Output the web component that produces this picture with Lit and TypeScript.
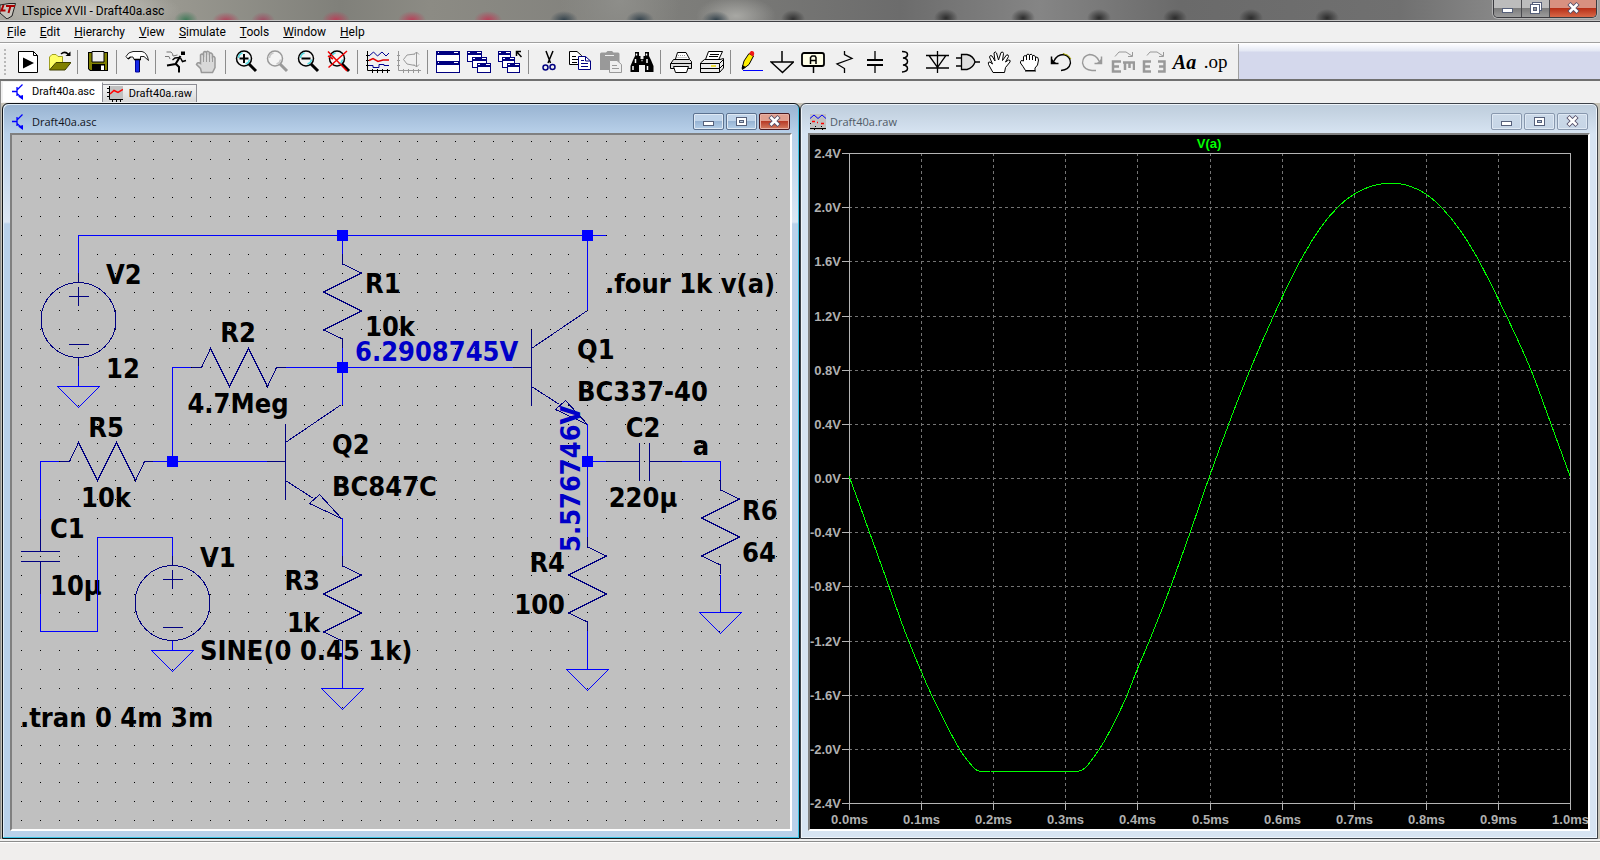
import { LitElement, html, svg, css } from "lit";
import { customElement, property } from "lit/decorators.js";

type Pt = [number, number];

interface Tool {
  label: string;
  art?: unknown;
  text?: string;
  kind?: string;
  off?: boolean;
}

const lens = (inner: unknown, tone = "#000", shine = "#4fd8e0") => svg`
  <path d="M15 14L22 21" stroke=${tone} stroke-width="3"/>
  <circle cx="10" cy="8.500" r="7.500" fill="#f4f4f4" stroke=${tone} stroke-width="1.500"/>
  <path d="M4.500 8a5.500 5.500 0 0 1 4-5M15.500 9.500a5.500 5.500 0 0 1-4 4.500" stroke=${shine} stroke-width="1.500" fill="none"/>
  ${inner}`;

const miniWin = (x: number, y: number, w: number, h: number) => svg`
  <rect x=${x + 0.5} y=${y + 0.5} width=${w} height=${h} fill="#fff" stroke="#000080"/>
  <rect x=${x} y=${y} width=${w + 1} height="4" fill="#000080"/>
  <path d="M${x + 1} ${y + 1.5}h2M${x + w - 4} ${y + 1.5}h4" stroke="#fff"/>`;

const handPath =
  "M6 22.500L1.500 14.500Q0.500 11.500 3 12L5.500 14L2.500 7Q3 4.500 5 6L8 11L7 3Q8 0.500 9.500 3L11.500 10L14 2.500Q16 1 16.500 3.500L15.500 10.500L19.500 5Q21.500 4 21.500 6.500L18.500 12L21.500 10Q24 10 23 12L18.500 17.500L17.500 22.500Z";

const groups: Tool[][] = [
  [
    {
      label: "New schematic",
      art: svg`<path d="M2.500 1.500H17.500L21.500 5.500V22.500H2.500Z" fill="#fff" stroke="#000"/>
        <path d="M17.500 1.500V5.500H21.500" fill="none" stroke="#000"/><path d="M7 7.500L18 13L7 18.500Z" fill="#000"/>`,
    },
    {
      label: "Open",
      art: svg`<path d="M2.500 19.500V7L5 4.500H9L11 6.500H15.500V12" fill="#ffff66" stroke="#a0a020"/>
        <path d="M2.500 20L9 12.500H24L18 20Z" fill="#808000" stroke="#404000"/>
        <path d="M14 4Q18 0.500 21.500 4.500" fill="none" stroke="#000" stroke-width="1.500"/><path d="M18.500 6H23.500V1.500Z" fill="#000"/>`,
    },
  ],
  [
    {
      label: "Save",
      art: svg`<path d="M2 2H22V21H4L2 19Z" fill="#000"/><path d="M3 3H21V20H4.500L3 18.500Z" fill="#808000"/>
        <path d="M6 1.500H18V12H6Z" fill="#eee" stroke="#000" stroke-width="1"/><path d="M6 14H19V21H6Z" fill="#000"/>
        <path d="M15 15.500h3V20h-3Z" fill="#fff"/>`,
    },
  ],
  [
    {
      label: "Control panel",
      art: svg`<path d="M10.500 9H14.500V22H10.500Z" fill="#1428e8" stroke="#0000a0"/><path d="M14.500 10V22" stroke="#00004a"/>
        <path d="M1 6.500Q3 2 8 1.500H17Q22 2.500 23.500 10.500L19 6.500H15.500V9.500H9L8 7H5.500L3 9Z" fill="#fff" stroke="#222"/>
        <path d="M3 9L5.500 7M9 9.500H16" stroke="#000" stroke-width="1.500"/>`,
    },
  ],
  [
    {
      label: "Run",
      art: svg`<path d="M17 1.500H21V5H17Z" fill="#000"/>
        <path d="M16.500 6L11.500 14L3 15.500M11.500 13.500L15 17V22.500" fill="none" stroke="#000" stroke-width="2"/>
        <path d="M16 7.500L11 8L8.500 10M16.500 8L18.500 11.500L22 10.500" fill="none" stroke="#000" stroke-width="1.500"/>
        <path d="M2.500 2H7Q9 3.500 9 6L13.500 5M1 6.500H5L6 9" fill="none" stroke="#777"/>`,
    },
    {
      label: "Halt",
      off: true,
      art: svg`<path d="M6.500 22.500L5.500 18.500L1.500 14.500Q2.500 11.500 5.500 13.500V5Q7 3 8.500 5V2.500Q10 0.500 11.500 2.500V2Q13 0.500 14.500 2.500V3.500Q16 2 17.500 4.500V7Q19 5.500 20 8V17.500L17.500 22.500Z" fill="#d8d8d8" stroke="#999" stroke-width="1.500"/>
        <path d="M8.500 5V12M11.500 3V12M14.500 3V12M17.500 6V12" stroke="#999"/>`,
    },
  ],
  [
    { label: "Zoom in", art: lens(svg`<path d="M5.500 8.500H14.500M10 4V13" stroke="#000" stroke-width="2"/>`) },
    { label: "Pan", off: true, art: lens("", "#999", "#c8c8c8") },
    { label: "Zoom out", art: lens(svg`<path d="M5.500 8.500H14.500" stroke="#000" stroke-width="2"/>`) },
    {
      label: "Zoom full extents",
      art: lens(svg`<path d="M1 1.500L20 21M20 1L1.500 17.500M1 6L6 9" stroke="#f00000" stroke-width="1.500"/>`),
    },
  ],
  [
    {
      label: "Pick visible traces",
      art: svg`<path d="M1.500 1V20.500H24M0 5.500H3M0 10.500H3M0 15.500H3M6.500 19V23M11.500 19V23M16.500 19V23M21.500 19V23" stroke="#000" fill="none"/>
        <path d="M3 6L7.500 2L11.500 6L16 2L20 6L23 3" stroke="#000090" fill="none"/>
        <path d="M3 10.500L7 8.500L12 11.500L17 10H23" stroke="#e00000" fill="none" stroke-width="1.500"/>
        <path d="M3 15.500H7V17.500H13V14.500H18V15.500H23" stroke="#000090" fill="none"/>`,
    },
    {
      label: "Autorange",
      off: true,
      art: svg`<path d="M1.500 1V20.500H24M0 5.500H3M0 10.500H3M0 15.500H3M6.500 19V23M11.500 19V23M16.500 19V23M21.500 19V23" stroke="#999" fill="none"/>
        <path d="M19.500 2V17M17 4.500L19.500 2L22 4.500M17 14.500L19.500 17L22 14.500M18 4L10 5L6.500 9.500L10 14L18 15.500" stroke="#999" fill="none"/>`,
    },
  ],
  [
    {
      label: "Tile windows",
      art: svg`<rect x="0.500" y="1.500" width="23" height="21" fill="#fff" stroke="#000080"/>
        <path d="M0 1H24V5H0ZM0 11H24V15H0Z" fill="#000080"/>
        <path d="M2 2.500H3M18 2.500H22M2 12.500H3M18 12.500H22M1 10.500H23" stroke="#fff"/>`,
    },
    { label: "Cascade windows", art: svg`${miniWin(0, 1, 14, 10)}${miniWin(5, 7, 14, 10)}${miniWin(10, 13, 13, 9)}` },
    {
      label: "Close all windows",
      art: svg`${miniWin(0, 1, 12, 10)}${miniWin(4, 7, 12, 10)}${miniWin(9, 13, 12, 9)}
        <path d="M18.500 6V1.500H23M18.500 1.500L23.500 7" stroke="#000" fill="none" stroke-width="1.500"/>`,
    },
  ],
  [
    {
      label: "Cut",
      art: svg`<path d="M9 1L13.500 13M16 1L11 13" stroke="#000" stroke-width="1.500"/>
        <circle cx="8.500" cy="17.500" r="2.500" fill="none" stroke="#000080" stroke-width="1.500"/><circle cx="15.500" cy="17" r="2.500" fill="none" stroke="#000080" stroke-width="1.500"/>`,
    },
    {
      label: "Copy",
      art: svg`<path d="M1.500 1.500H9L13.500 5.500V14.500H1.500Z" fill="#fff" stroke="#000"/><path d="M4 6.500H8M4 9.500H10M4 12.500H9" stroke="#000"/>
        <path d="M10.500 6.500H17.500L22.500 11V19.500H10.500Z" fill="#fff" stroke="#000080"/><path d="M17.500 6.500V11H22.500M13 10.500H16M13 13.500H20M13 16.500H20" stroke="#000080" fill="none"/>`,
    },
    {
      label: "Paste",
      off: true,
      art: svg`<path d="M1 4Q1 2.500 2.500 2.500H7L8.500 1H13L14.500 2.500H19Q20.500 2.500 20.500 4V20H1Z" fill="#999"/><path d="M6 5.500H15" stroke="#eee"/>
        <path d="M10.500 10.500H18L22.500 14.500V22.500H10.500Z" fill="#eee" stroke="#999"/><path d="M13 15.500H18M13 18.500H20" stroke="#999"/>`,
    },
    {
      label: "Find",
      art: svg`<path d="M5 2H9V6H10.500V9H13.500V6H15V2H19V6L21 10L23.500 16V22H15V15H9V22H0.500V16L3 10L5 6Z" fill="#000"/>
        <path d="M6.500 3.500V5.500M16.500 3.500V5.500M5.500 9V13M17 9V13M3 16V20M17.500 16V20M11.500 10.500H12.500" stroke="#fff" stroke-width="1.500"/>`,
    },
  ],
  [
    {
      label: "Print setup",
      art: svg`<path d="M6.500 9L8.500 2.500H17L20.500 9" fill="#fff" stroke="#000"/><path d="M9 5.500H17M8.500 7.500H18" stroke="#999" stroke-dasharray="1 1"/>
        <path d="M1.500 14L4.500 9.500H20.500L22.500 11.500V18.500H1.500Z" fill="#ddd" stroke="#000"/><path d="M1.500 13.500H22.500" stroke="#000"/>
        <path d="M4.500 16.500H19.500L17.500 22.500H6.500Z" fill="#fff" stroke="#000"/>`,
    },
    {
      label: "Print",
      art: svg`<path d="M5.500 9.500L8.500 1.500H22.500L18.500 10" fill="#fff" stroke="#000"/><path d="M10 4.500H19M9 6.500H18" stroke="#000"/>
        <path d="M0.500 13L4.500 9.500H20L23.500 8.500V18L19.500 22.500H0.500Z" fill="#eee" stroke="#000"/><path d="M0.500 13.500H19.500V22M19.500 13.500L23.500 9.500M1 18.500H19.500L23 15" stroke="#000" fill="none"/>
        <path d="M11 16H16" stroke="#e8d800" stroke-width="1.500"/>`,
    },
  ],
  [
    {
      label: "Wire",
      art: svg`<path d="M3 18.500L5 11L10 3.500L14.500 6L10 14.500L4 19Z" fill="#ffee00" stroke="#000"/><path d="M10 3.500L12 1Q16 0.500 15 5L14 6.500Z" fill="#f01818"/>
        <path d="M3 20V15L7 17Z" fill="#000"/><path d="M4 20.500H24" stroke="#0000ff"/>`,
    },
    { label: "Ground", art: svg`<path d="M12 1V12M1 12H23.500L12.500 22.500Z" fill="none" stroke="#000" stroke-width="1.500"/>` },
    {
      label: "Label net",
      art: svg`<rect x="1" y="3" width="22" height="13" rx="2" fill="#ffffe8" stroke="#000" stroke-width="1.800"/><path d="M12.500 16V23" stroke="#000" stroke-width="1.500"/>
        <path d="M9.500 14V7.500L11 6H14L15 7.500V14M9 10.500H15.500" fill="none" stroke="#000" stroke-width="1.500"/>`,
    },
    { label: "Resistor", art: svg`<path d="M12.500 1V4.500L20 8.500L5 14L12.500 18.500V23" fill="none" stroke="#000" stroke-width="1.300"/>` },
    { label: "Capacitor", art: svg`<path d="M12 1V10M12 15V23" stroke="#000" stroke-width="1.300"/><path d="M4 10H20M4 15H20" stroke="#000" stroke-width="2"/>` },
    {
      label: "Inductor",
      art: svg`<path d="M8 1.500Q13.500 1.500 13.500 4.500T9 8Q13.500 8.500 13.500 11.500T9 15Q13.500 15.500 13.500 18.500T8 22" fill="none" stroke="#000" stroke-width="1.500"/>`,
    },
    { label: "Diode", art: svg`<path d="M12.500 1V23M1 5.500H24M1 18H24M4 5.500L12.500 17.500L21 5.500Z" fill="none" stroke="#000" stroke-width="1.300"/>` },
    {
      label: "Component",
      art: svg`<path d="M5.500 4.500H11Q17.500 6 19 12Q17 18 11 19.500H5.500Z" fill="#ddd" stroke="#000" stroke-width="1.300"/><path d="M0 8H5M0 16H5M19 12H24" stroke="#000" stroke-width="1.500"/>`,
    },
    { label: "Move", art: svg`<path d=${handPath} fill="#fff" stroke="#000"/>` },
    {
      label: "Drag",
      art: svg`<path d="M7.500 20.500L5 16.500L2.500 13Q2 9.500 5.500 11V6.500Q7 4.500 8.500 6.500V5Q10 3 11.500 5Q13.500 3 14.500 5.500Q16.500 4.500 17.500 7Q20.500 6.500 20.500 10L19.500 15L17 18V20.500Z" fill="#fff" stroke="#000"/>
        <path d="M8.500 6V10M11.500 5V10M14.500 6V10M17.500 7V11M7 21H18" stroke="#000"/>`,
    },
    {
      label: "Undo",
      art: svg`<path d="M5 11Q8 4.500 14.500 4.500Q21.500 6 21.500 13Q20 20 12 20.500" fill="none" stroke="#000" stroke-width="1.300"/><path d="M2.500 6.500V13.500H9.500" fill="none" stroke="#000" stroke-width="1.500"/><path d="M3 9V13.500H7.500Z" fill="#000"/><path d="M14 3.500Q20 4.500 22 9" stroke="#a0a000" fill="none"/>`,
    },
    {
      label: "Redo",
      off: true,
      art: svg`<path d="M19 11Q16 4.500 9.500 4.500Q2.500 6 2.500 13Q4 20 12 20.500H16" fill="none" stroke="#999" stroke-width="1.300"/><path d="M21.500 6.500V13.500H14.500" fill="none" stroke="#999" stroke-width="1.500"/><path d="M21 9V13.500H16.500Z" fill="#999"/>`,
    },
    {
      label: "Rotate",
      off: true,
      art: svg`<path d="M10 11.500H2V21.500H10M2 16.500H8" fill="none" stroke="#999" stroke-width="2.500"/><path d="M12 12.500H24M14 12V20M18.500 12V18M23 12V20" fill="none" stroke="#999" stroke-width="2.500"/>
        <path d="M4 6.500L8 2H15L21 6M21.500 2V6.500H17" fill="none" stroke="#999"/>`,
    },
    {
      label: "Mirror",
      off: true,
      art: svg`<path d="M9 11.500H2V21.500H9M2 16.500H8M16 11.500H22.500V21.500H16M22.500 16.500H17" fill="none" stroke="#999" stroke-width="2.500"/>
        <path d="M5 5.500L8 2H15L21 6M21.500 2V6.500H17" fill="none" stroke="#999"/>`,
    },
    { label: "Text", text: "Aa", kind: "aa" },
    { label: "SPICE directive", text: ".op", kind: "op" },
  ],
];

const transistorIcon = html`<svg class="i16" viewBox="0 0 16 16" aria-hidden="true">
  <path d="M0 7.500H5M5 3V12M5 6L10.500 0.500M5 9.500L10 14" fill="none" stroke="#0000ff" stroke-width="1.300" />
  <path d="M6 12.500L11 11V16Z" fill="#0000ff" />
</svg>`;

const rawTabIcon = html`<svg class="i16" viewBox="0 0 16 16" aria-hidden="true">
  <path d="M2 0H16V13H2Z" fill="#c0c0c0" />
  <path d="M2.500 0V13.500H16M0 2.500H2M0 6.500H2M0 10.500H2M5.500 13V16M9.500 13V16M13.500 13V16" stroke="#000" fill="none" />
  <path d="M3 8L7 4.500L11 6.500L16 3.500" stroke="#f00" fill="none" stroke-width="1.500" />
</svg>`;

const rawWinIcon = html`<svg class="i16" viewBox="0 0 16 16" aria-hidden="true">
  <path d="M0 0H16V16H0Z" fill="#c0c0c0" />
  <path d="M0 4.500L4 1L8 4.500L12 1L16 4.500" stroke="#00f" fill="none" />
  <path d="M2 7.500H5M7 8.500H8M11 9.500H14" stroke="#f00" stroke-width="1.500" />
  <path d="M0 9.500H1M5 12.500H6M11 12.500H12M0 14.500H16M4 15.500H5M12 15.500H13" stroke="#000" />
</svg>`;

const glyphs: Record<string, unknown> = {
  Minimize: svg`<rect x="3.500" y="7.500" width="10" height="4" fill="#fff" stroke="#56607a"/>`,
  Maximize: svg`<rect x="3.500" y="3.500" width="10" height="8" fill="#fff" stroke="#56607a"/><rect x="6.500" y="6.500" width="4" height="2" fill="#b8c8dc" stroke="#56607a"/>`,
  Restore: svg`<rect x="5.500" y="1.500" width="9" height="8" fill="#fff" stroke="#56607a"/><rect x="3.500" y="3.500" width="9" height="9" fill="#fff" stroke="#56607a"/><rect x="6.500" y="6.500" width="3" height="3" fill="#999" stroke="#56607a"/>`,
  Close: svg`<path d="M4 2.500L13 11.500M13 2.500L4 11.500" stroke="#56506a" stroke-width="4.500"/><path d="M4.500 3L12.500 11M12.500 3L4.500 11" stroke="#fff" stroke-width="2.500"/>`,
};

const glyph = (name: string) => html`<svg class="glyph" viewBox="0 0 17 15" aria-hidden="true">${glyphs[name]}</svg>`;

@customElement("doc-window")
class DocWindow extends LitElement {
  @property() heading = "";
  @property({ type: Boolean, reflect: true }) active = false;

  static styles = css`
    :host {
      display: flex;
      flex-direction: column;
      min-width: 0;
      min-height: 0;
      box-sizing: border-box;
      padding: 0 7px 7px;
      border: 1px solid #3c4148;
      border-radius: 6px 6px 0 0;
      background: linear-gradient(#bdccdb, #d7e4f2 30px);
      box-shadow: inset 0 0 0 1px #eef4fa;
    }
    :host([active]) {
      border-color: #101418;
      background: linear-gradient(#98b3d1, #b9d1ea 30px, #dbe6f3 118px, #b9d1ea 120px);
      box-shadow: inset -1px -1px 0 #3cc4e4, inset 1px 1px 0 #e0edf8;
    }
    .bar {
      display: flex;
      align-items: center;
      gap: 4px;
      height: 29px;
      padding: 6px 2px 0;
      box-sizing: border-box;
      color: #4f5a66;
    }
    :host([active]) .bar {
      color: #10151c;
    }
    .name {
      flex: 1;
      font: 11px/16px "Open Sans", sans-serif;
    }
    .buttons {
      display: flex;
      gap: 2px;
    }
    button {
      display: grid;
      place-items: center;
      width: 31px;
      height: 17px;
      padding: 0;
      border: 1px solid #8898ae;
      border-radius: 2px;
      background: linear-gradient(#cbd9e8, #c6d5e6);
      box-shadow: inset 0 0 0 1px #dfe9f4;
    }
    :host([active]) button {
      border-color: #5c7290;
      background: linear-gradient(#c0d4ea 50%, #98b4d4 50%, #b4cee8);
    }
    :host([active]) .close {
      border-color: #4a1a20;
      background: linear-gradient(#e0a090 50%, #b83c28 50%, #d47c60);
      box-shadow: inset 0 0 0 1px #e8b0a4;
    }
    .glyph {
      width: 17px;
      height: 15px;
    }
    .body {
      flex: 1;
      min-height: 0;
      overflow: hidden;
      border: 2px solid #fff;
      border-top-color: #808080;
      border-left-color: #808080;
    }
  `;

  render() {
    return html`
      <div class="bar">
        <slot name="icon"></slot>
        <span class="name">${this.heading}</span>
        <div class="buttons">
          <button aria-label="Minimize">${glyph("Minimize")}</button>
          <button aria-label="Maximize">${glyph("Maximize")}</button>
          <button class="close" aria-label="Close">${glyph("Close")}</button>
        </div>
      </div>
      <div class="body"><slot></slot></div>
    `;
  }
}

@customElement("schematic-view")
class SchematicView extends LitElement {
  static styles = css`
    :host {
      display: block;
      height: 100%;
      background: #c0c0c0;
    }
    .sheet {
      display: block;
      width: 100%;
      height: 100%;
    }
    .label {
      font: bold 27px "DejaVu Sans Condensed", "DejaVu Sans", sans-serif;
    }
    .probe {
      fill: #0000c8;
    }
    .mid {
      text-anchor: middle;
    }
    .end {
      text-anchor: end;
    }
    .lines {
      fill: none;
      shape-rendering: crispEdges;
    }
    .wire {
      stroke: #0000ff;
    }
    .part {
      stroke: #000080;
    }
    .dot {
      stroke: #000;
    }
    .joint {
      fill: #0000ff;
    }
  `;

  private dots() {
    let d = "";
    for (let r = 0; r < 37; r++) {
      const y = Math.round(140.5 + 18.875 * r) + 0.5;
      for (let c = 0; c < 41; c++) d += `M${Math.round(21 + 18.875 * c)} ${y}h1`;
    }
    return d;
  }

  private ground(x: number, y: number) {
    return `M${x - 21} ${y}H${x + 21}L${x} ${y + 21}Z`;
  }

  private resistorV(x: number, y: number) {
    return `M${x} ${y - 10}V${y}L${x + 19} ${y + 9}L${x - 19} ${y + 28}L${x + 19} ${y + 47}L${x - 19} ${y + 66}L${x} ${y + 75}V${y + 84}`;
  }

  private resistorH(x: number, y: number) {
    return `M${x - 10} ${y}H${x}L${x + 9} ${y - 19}L${x + 28} ${y + 19}L${x + 47} ${y - 19}L${x + 66} ${y + 19}L${x + 75} ${y}H${x + 84}`;
  }

  private source(x: number, y: number) {
    return `M${x - 37.5} ${y}a37.5 37.5 0 1 0 75 0a37.5 37.5 0 1 0 -75 0M${x - 10} ${y - 24}H${x + 10}M${x} ${y - 33}V${y - 14}M${x - 10} ${y + 24}H${x + 10}M${x} ${y - 47}V${y - 37}M${x} ${y + 37}V${y + 47}`;
  }

  private npn(x: number, y: number) {
    return `M${x - 19} ${y}H${x}M${x} ${y - 38}V${y + 38}M${x} ${y - 19}L${x + 56} ${y - 57}M${x} ${y + 19}L${x + 28} ${y + 37}M${x + 24} ${y + 42}L${x + 34} ${y + 33}L${x + 56} ${y + 57}Z`;
  }

  private labels: [string, number, number, string?][] = [
    ["V2", 106, 284],
    ["12", 106, 378],
    ["R1", 365, 293],
    ["10k", 365, 336],
    ["R2", 238, 342, "mid"],
    ["4.7Meg", 238, 413, "mid"],
    ["R5", 106, 437, "mid"],
    ["10k", 106, 507, "mid"],
    ["Q2", 332, 454],
    ["BC847C", 332, 496],
    ["Q1", 577, 359],
    ["BC337-40", 577, 401],
    ["C2", 643, 437, "mid"],
    ["220µ", 643, 507, "mid"],
    ["a", 701, 455, "mid"],
    ["R6", 742, 520],
    ["64", 742, 562],
    ["R4", 565, 572, "end"],
    ["100", 565, 614, "end"],
    ["R3", 320, 590, "end"],
    ["1k", 320, 632, "end"],
    ["C1", 50, 538],
    ["10µ", 50, 595],
    ["V1", 200, 567],
    ["SINE(0 0.45 1k)", 200, 660],
    [".tran 0 4m 3m", 20, 727],
    [".four 1k v(a)", 605, 293],
  ];

  private joints: Pt[] = [
    [342, 235],
    [587, 235],
    [342, 367],
    [172, 461],
    [587, 461],
  ];

  render() {
    const wires =
      "M78.5 273V235.5H606M342.5 235V254M587.5 235V310M342.5 348V405M172.5 461V367.5H191M286 367.5H513" +
      "M59 461.500H40.500V519M153 461.500H267M40.500 594V631.500H97.500V537.500H172.500V556M78.500 366V386M172.500 650V641" +
      "M342.500 518V556M342.500 650V688M587.500 424V537M587.500 631V669M587 461.500H606M682 461.500H720.500V480M720.500 575V612" +
      this.ground(78.5, 386.5) + this.ground(172.5, 650.5) + this.ground(342.5, 688.5) + this.ground(587.5, 669.5) + this.ground(720.5, 612.5);
    const parts =
      this.source(78.5, 320) + this.source(172.5, 603) +
      this.resistorV(342.5, 264) + this.resistorV(342.5, 566) + this.resistorV(587.5, 547) + this.resistorV(720.5, 490) +
      this.resistorH(201.5, 367.5) + this.resistorH(69.5, 461.5) +
      this.npn(285.5, 461.5) + this.npn(531.5, 367.5) +
      "M40.500 519V551M21 551.500H60M21 561.500H60M40.500 561V594M606 461.500H639M639.500 443V481M649.500 443V481M650 461.500H682";
    return html`<svg class="sheet" viewBox="12 135 778 694" role="img" aria-label="Amplifier schematic">
      <path class="lines dot" d=${this.dots()} />
      ${this.labels.map(([t, x, y, a]) => svg`<text class="label ${a ?? ""}" x=${x} y=${y}>${t}</text>`)}
      <path class="lines part" d=${parts} />
      <path class="lines wire" d=${wires} />
      ${this.joints.map(([x, y]) => svg`<rect class="joint" x=${x - 5} y=${y - 5} width="11" height="11"/>`)}
      <text class="label probe" x="355" y="361">6.2908745V</text>
      <text class="label probe" transform="translate(580 552) rotate(-90)">5.576746V</text>
    </svg>`;
  }
}

@customElement("waveform-view")
class WaveformView extends LitElement {
  static styles = css`
    :host {
      display: block;
      height: 100%;
      background: #000;
    }
    .plot {
      display: block;
      width: 100%;
      height: 100%;
    }
    .axis,
    .grid,
    .trace {
      fill: none;
      shape-rendering: crispEdges;
    }
    .axis {
      stroke: #b4b4b4;
    }
    .grid {
      stroke: #747474;
      stroke-dasharray: 3 3;
    }
    .trace {
      stroke: #00ff00;
    }
    .tick {
      font: bold 13px "Liberation Sans", Arial, sans-serif;
      fill: #b0b0b0;
      text-anchor: middle;
    }
    .tick.y {
      text-anchor: end;
    }
    .tick.title {
      fill: #00ff00;
    }
  `;

  private trace: Pt[] = [
    [849, 476], [860, 506], [886, 578], [904, 629], [921, 671], [934, 700], [960, 750], [975, 769], [979, 771], [990, 772],
    [1000, 771.5], [1074, 771.5], [1083, 769.5], [1091, 761], [1105, 740], [1125, 700], [1137, 670], [1153, 632], [1172, 583],
    [1191, 530], [1210, 475], [1231, 418], [1250, 370], [1274, 315], [1298, 265], [1321, 227], [1340, 205], [1356, 193],
    [1372, 186], [1384, 183.5], [1398, 183.5], [1412, 187], [1426, 194], [1442, 208], [1460, 230], [1479, 261], [1506, 315],
    [1531, 370], [1551, 424], [1570, 476],
  ];

  private smooth(p: Pt[]) {
    let d = `M${p[0][0]} ${p[0][1]}`;
    for (let i = 0; i < p.length - 1; i++) {
      const a = p[Math.max(0, i - 1)], b = p[i], c = p[i + 1], e = p[Math.min(p.length - 1, i + 2)];
      const k = (c[0] - b[0]) / 3;
      const m = (u: Pt, v: Pt) => (v[0] === u[0] ? 0 : (v[1] - u[1]) / (v[0] - u[0]));
      d += `C${b[0] + k} ${b[1] + k * m(a, c)} ${c[0] - k} ${c[1] - k * m(b, e)} ${c[0]} ${c[1]}`;
    }
    return d;
  }

  render() {
    const xs = Array.from({ length: 11 }, (_, i) => Math.round(849 + 72.1 * i) + 0.5);
    const ys = Array.from({ length: 13 }, (_, i) => Math.round(153 + 54.17 * i) + 0.5);
    const grid = xs.slice(1, -1).map((x) => `M${x} 153V803`).join("") + ys.slice(1, -1).map((y) => `M849 ${y}H1570`).join("");
    const ticks = xs.map((x) => `M${x} 803V810`).join("") + ys.map((y) => `M842 ${y}H849`).join("");
    return html`<svg class="plot" viewBox="810 135 778 694" role="img" aria-label="Plot of V(a)">
      <path class="grid" d=${grid} />
      <path class="axis" d=${"M849.5 153.500H1570.500V803.500H849.500Z" + ticks} />
      <path class="trace" d=${this.smooth(this.trace)} />
      <text class="tick title" x="1209" y="148">V(a)</text>
      ${xs.map((x, i) => svg`<text class="tick" x=${x} y="824">${(i / 10).toFixed(1)}ms</text>`)}
      ${ys.map((y, i) => svg`<text class="tick y" x="841" y=${y + 4.5}>${i === 6 ? "0.0" : (2.4 - 0.4 * i).toFixed(1)}V</text>`)}
    </svg>`;
  }
}

@customElement("app-root")
class AppRoot extends LitElement {
  static styles = css`
    :host {
      display: flex;
      flex-direction: column;
      height: 100vh;
      background: #f0f0f0;
      font: 12px/16px Roboto, "Open Sans", sans-serif;
      color: #000;
    }
    .title {
      display: flex;
      align-items: center;
      gap: 6px;
      height: 22px;
      box-sizing: border-box;
      border-bottom: 1px solid #3e3e42;
      box-shadow: inset 0 -1px 0 #c4c4c4;
      background:
        radial-gradient(90px 24px at 90px 10px, rgba(214, 212, 206, 0.8), transparent),
        radial-gradient(12px 9px at 186px 20px, #3f7a58, transparent),
        radial-gradient(14px 9px at 226px 21px, #b04058, transparent),
        radial-gradient(12px 9px at 263px 21px, #a04860, transparent),
        radial-gradient(14px 9px at 336px 20px, #b84058, transparent),
        radial-gradient(14px 9px at 412px 20px, #b84058, transparent),
        radial-gradient(14px 9px at 488px 20px, #b84058, transparent),
        radial-gradient(14px 9px at 564px 20px, #33424c, transparent),
        radial-gradient(14px 9px at 640px 20px, #33424c, transparent),
        radial-gradient(14px 9px at 716px 20px, #33424c, transparent),
        radial-gradient(12px 9px at 793px 19px, #303030, transparent),
        radial-gradient(12px 9px at 946px 18px, #2c2c2c, transparent),
        radial-gradient(12px 9px at 1023px 18px, #2c2c2c, transparent),
        radial-gradient(12px 9px at 1099px 18px, #2c2c2c, transparent),
        radial-gradient(12px 9px at 1175px 18px, #2c2c2c, transparent),
        radial-gradient(12px 9px at 1251px 18px, #2c2c2c, transparent),
        radial-gradient(12px 9px at 1327px 18px, #2c2c2c, transparent),
        radial-gradient(40px 20px at 736px 16px, #a8a8a4, transparent),
        radial-gradient(60px 60px at 620px 0, #8e8e8a, transparent),
        linear-gradient(90deg, #aaa8a0, #98978f 180px, #80807a 340px, #8c8b84 430px, #7c7c79 700px, #6c6c6c 900px, #858585 1040px, #6a6a6a 1180px, #707070 1400px, #a0a0a0);
    }
    .caption {
      flex: 1;
    }
    .sys {
      display: flex;
      align-self: flex-start;
      margin-right: 3px;
      height: 18px;
      overflow: hidden;
      box-sizing: border-box;
      border: 1px solid #3a3a3e;
      border-top: 0;
      border-radius: 0 0 5px 5px;
      box-shadow: 0 0 0 1px #b4b4b4;
    }
    .sys button {
      display: grid;
      place-items: center;
      width: 28px;
      padding: 0;
      border: 0;
      border-right: 1px solid #4a4a4e;
      background: linear-gradient(#bcbcbc 50%, #7c7c7c 50%, #9c9c9c);
    }
    .sys .close {
      width: 46px;
      border-right: 0;
      background: linear-gradient(#d89080 45%, #b83018 50%, #d86848);
    }
    .glyph {
      width: 17px;
      height: 15px;
    }
    .menu {
      display: flex;
      height: 20px;
      border-bottom: 1px solid #a0a0a0;
    }
    .menu button {
      padding: 0 7px;
      border: 0;
      background: none;
      font: inherit;
      color: inherit;
    }
    .toolbar {
      display: flex;
      height: 38px;
      border-top: 1px solid #fff;
      border-bottom: 2px solid #707070;
      box-sizing: border-box;
      background: linear-gradient(#fcfcff, #e4e8f4 7px, #d4d8ec 8px);
    }
    .strip {
      display: flex;
      align-items: center;
      padding: 0 7px 0 4px;
      border-right: 1px solid #a0a0a0;
      background: linear-gradient(#f6f6f6, #f0f0f0 6px);
    }
    .grip {
      width: 2px;
      height: 26px;
      margin-right: 6px;
      background: repeating-linear-gradient(#b8b8b8 0 2px, transparent 2px 4px);
    }
    .group {
      display: flex;
    }
    .group + .group::before {
      content: "";
      align-self: center;
      width: 1px;
      height: 24px;
      margin: 0 4px 0 3px;
      background: #8c8c8c;
    }
    .tool {
      display: grid;
      place-items: center;
      width: 31px;
      height: 34px;
      padding: 0;
      border: 0;
      background: none;
      color: #000;
    }
    .tool svg {
      width: 24px;
      height: 24px;
    }
    .aa {
      font: italic bold 20px/24px "Liberation Serif", serif;
    }
    .op {
      font: 19px/24px "Liberation Serif", serif;
    }
    .tabs {
      display: flex;
      align-items: flex-end;
      height: 22px;
      padding: 0 0 1px 2px;
      box-sizing: border-box;
      border-left: 1px solid #8c8c8c;
      font: 11px/16px Roboto, "Open Sans", sans-serif;
    }
    .tab {
      display: flex;
      align-items: center;
      gap: 6px;
      height: 18px;
      padding: 0 4px;
      border: 1px solid #8c8c94;
      border-width: 1px 1px 0 0;
      background: linear-gradient(#f4f4f4, #d8d8d8);
      font: inherit;
      color: #000;
    }
    .tab.on {
      height: 20px;
      gap: 4px;
      padding: 0 7px 2px 9px;
      border-top-color: #fff;
      background: #fff;
    }
    .i16 {
      flex: none;
      width: 16px;
      height: 16px;
    }
    .desk {
      flex: 1;
      min-height: 0;
      display: grid;
      grid-template-columns: minmax(0, 1fr) minmax(0, 1fr);
      padding: 0 2px 0 1px;
      border-left: 1px solid #8c8c8c;
      background: #c8c4b8;
    }
    .icon {
      display: contents;
    }
    .status {
      height: 18px;
      margin-top: 2px;
      border-top: 1px solid #8c8c8c;
      box-shadow: inset 0 1px 0 #fff;
      background: #f0eeed;
    }
  `;

  render() {
    const menus = ["File", "Edit", "Hierarchy", "View", "Simulate", "Tools", "Window", "Help"];
    return html`
      <header class="title">
        <svg class="i16" viewBox="0 0 16 16" aria-hidden="true">
          <path d="M0 2L9 0.500H15.500L12 13L7 16L0 10Z" fill="#c8c4bc" stroke="#222" />
          <path d="M3.500 2L1.500 7.500H5.500M6 3H15M10.500 3L8.500 10" fill="none" stroke="#a00" stroke-width="2" />
        </svg>
        <span class="caption">LTspice XVII - Draft40a.asc</span>
        <div class="sys">
          <button aria-label="Minimize">${glyph("Minimize")}</button>
          <button aria-label="Restore">${glyph("Restore")}</button>
          <button class="close" aria-label="Close">${glyph("Close")}</button>
        </div>
      </header>
      <nav class="menu">${menus.map((m) => html`<button><u>${m[0]}</u>${m.slice(1)}</button>`)}</nav>
      <div class="toolbar">
        <div class="strip">
          <span class="grip"></span>
          ${groups.map(
            (g) => html`<div class="group">
              ${g.map(
                (t) => html`<button class="tool ${t.kind ?? ""}" aria-label=${t.label} ?disabled=${!!t.off}>
                  ${t.text ?? html`<svg viewBox="0 0 24 24" aria-hidden="true">${t.art}</svg>`}
                </button>`
              )}
            </div>`
          )}
        </div>
      </div>
      <div class="tabs">
        <button class="tab on">${transistorIcon}Draft40a.asc</button>
        <button class="tab">${rawTabIcon}Draft40a.raw</button>
      </div>
      <main class="desk">
        <doc-window heading="Draft40a.asc" active>
          <span slot="icon" class="icon">${transistorIcon}</span>
          <schematic-view></schematic-view>
        </doc-window>
        <doc-window heading="Draft40a.raw">
          <span slot="icon" class="icon">${rawWinIcon}</span>
          <waveform-view></waveform-view>
        </doc-window>
      </main>
      <footer class="status"></footer>
    `;
  }
}
